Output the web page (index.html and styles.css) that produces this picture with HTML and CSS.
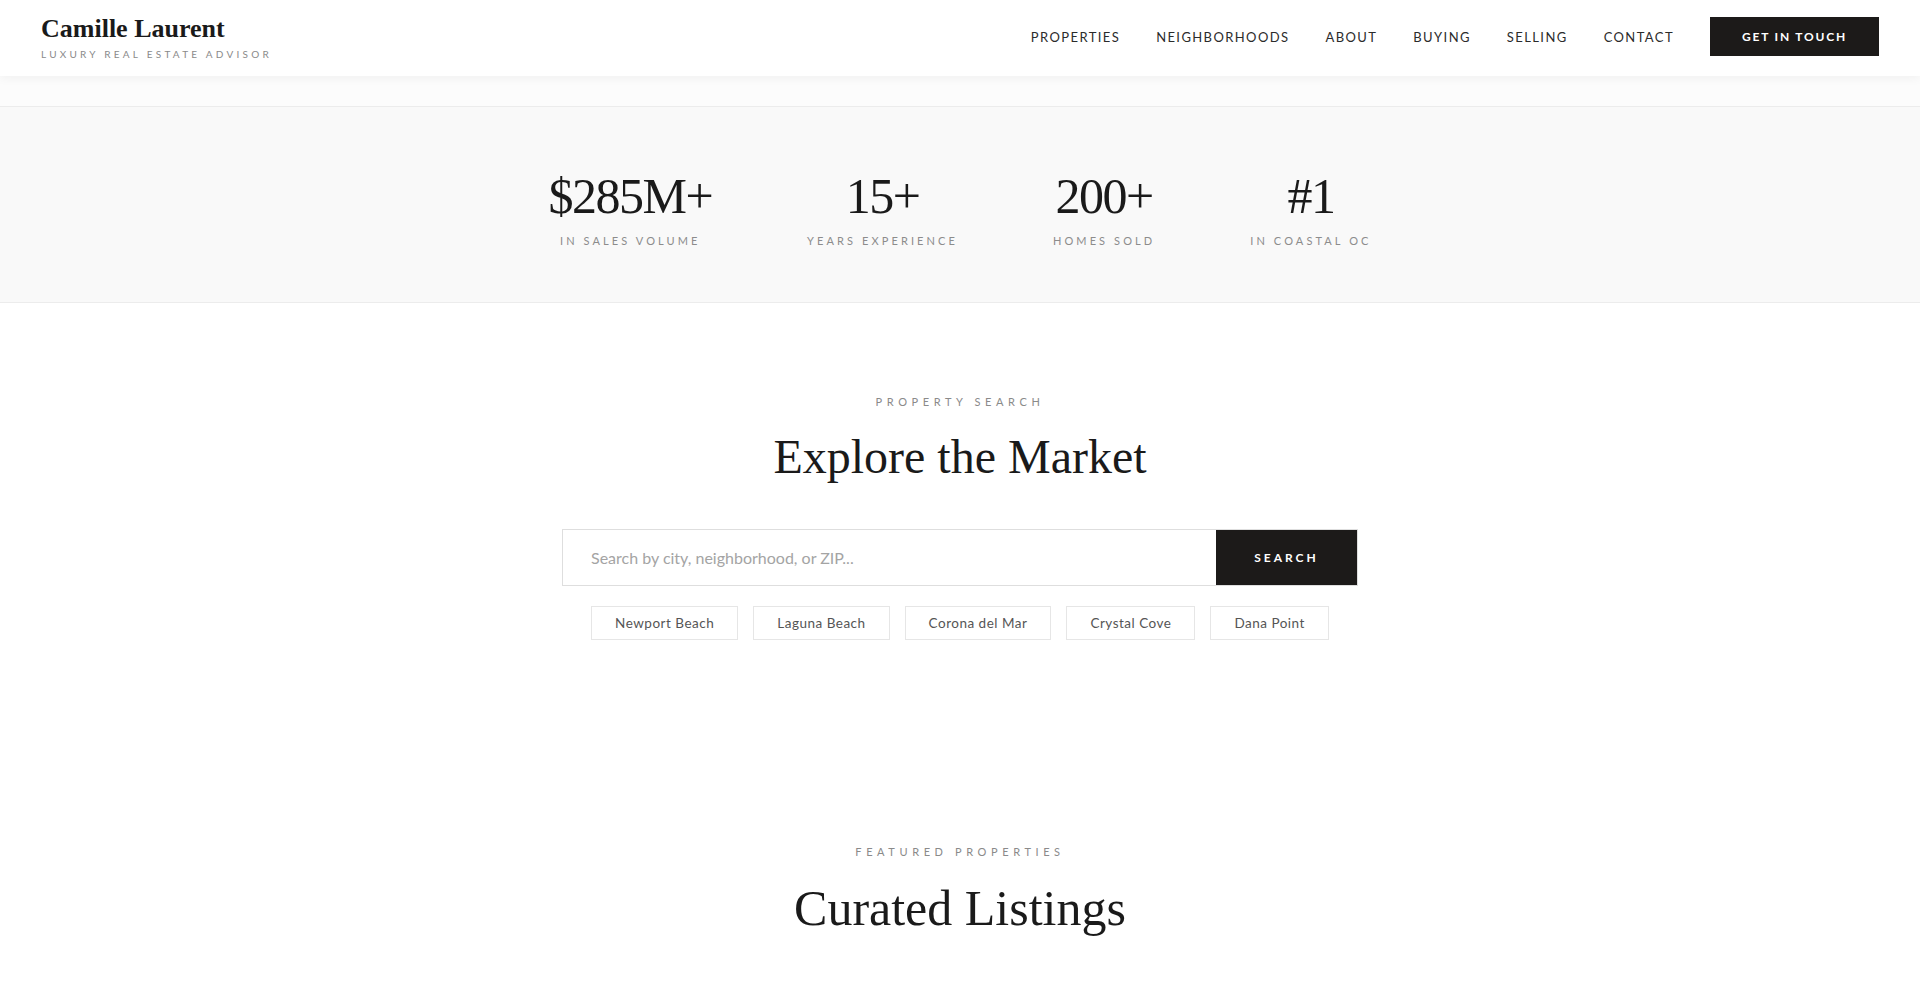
FILE: index.html
```html
<!DOCTYPE html>
<html lang="en">
<head>
    <meta charset="UTF-8">
    <meta name="viewport" content="width=device-width, initial-scale=1.0">
    <title>Camille Laurent | Luxury Real Estate Advisor</title>
    <link rel="stylesheet" href="styles.css">
</head>
<body>
    <header class="site-header">
        <a href="#" class="brand">
            <span class="brand-name">Camille Laurent</span>
            <span class="brand-tagline">Luxury Real Estate Advisor</span>
        </a>
        <nav class="main-nav">
            <a href="#">Properties</a>
            <a href="#">Neighborhoods</a>
            <a href="#">About</a>
            <a href="#">Buying</a>
            <a href="#">Selling</a>
            <a href="#">Contact</a>
            <a href="#" class="btn-dark">Get in Touch</a>
        </nav>
    </header>

    <div class="hero-end"></div>

    <section class="stats">
        <div class="stat">
            <div class="stat-value">$285M+</div>
            <div class="stat-label">In Sales Volume</div>
        </div>
        <div class="stat">
            <div class="stat-value">15+</div>
            <div class="stat-label">Years Experience</div>
        </div>
        <div class="stat">
            <div class="stat-value">200+</div>
            <div class="stat-label">Homes Sold</div>
        </div>
        <div class="stat">
            <div class="stat-value">#1</div>
            <div class="stat-label">In Coastal OC</div>
        </div>
    </section>

    <section class="search-section">
        <div class="eyebrow">Property Search</div>
        <h2 class="section-title">Explore the Market</h2>

        <form class="search-bar" onsubmit="return false;">
            <input type="text" placeholder="Search by city, neighborhood, or ZIP...">
            <button type="submit">Search</button>
        </form>

        <div class="quick-areas">
            <a href="#" class="area-chip">Newport Beach</a>
            <a href="#" class="area-chip">Laguna Beach</a>
            <a href="#" class="area-chip">Corona del Mar</a>
            <a href="#" class="area-chip">Crystal Cove</a>
            <a href="#" class="area-chip">Dana Point</a>
        </div>
    </section>

    <section class="featured">
        <div class="eyebrow">Featured Properties</div>
        <h2 class="section-title">Curated Listings</h2>
    </section>
</body>
</html>
```

FILE: styles.css
```css
* {
    box-sizing: border-box;
}

body {
    margin: 0;
    font-family: 'Lato', 'Liberation Sans', sans-serif;
    color: #1a1a1a;
    background-color: #fff;
}

a {
    color: inherit;
    text-decoration: none;
}

/* Header */
.site-header {
    position: relative;
    z-index: 2;
    height: 76px;
    padding: 0 41px 3px 41px;
    display: flex;
    align-items: center;
    justify-content: space-between;
    background-color: #fff;
    box-shadow: 0 2px 10px rgba(0, 0, 0, 0.05);
}

.brand {
    display: flex;
    flex-direction: column;
    margin-top: 2px;
}

.brand-name {
    font-family: 'Liberation Serif', serif;
    font-size: 26px;
    font-weight: 700;
    line-height: 1.1;
    color: #1a1a1a;
}

.brand-tagline {
    margin-top: 4px;
    font-size: 10px;
    letter-spacing: 3.25px;
    text-transform: uppercase;
    color: #8a8a8a;
}

.main-nav {
    display: flex;
    align-items: center;
    gap: 36px;
}

.main-nav a {
    font-size: 13px;
    letter-spacing: 1.4px;
    text-transform: uppercase;
    color: #2b2b2b;
}

.main-nav .btn-dark {
    height: 39px;
    padding: 0 32px;
    display: flex;
    align-items: center;
    background-color: #1c1a19;
    color: #fff;
    font-size: 12px;
    font-weight: 700;
    letter-spacing: 1.8px;
}

/* Tail of the hero strip under the header */
.hero-end {
    height: 31px;
    background-color: #fcfcfc;
    border-bottom: 1px solid #ececec;
}

/* Stats band */
.stats {
    display: flex;
    justify-content: center;
    gap: 95px;
    padding: 64px 0 54px;
    background-color: #f9f9f9;
    border-bottom: 1px solid #ececec;
}

.stat {
    text-align: center;
}

.stat-value {
    font-family: 'Liberation Serif', serif;
    font-size: 50px;
    line-height: 1;
    letter-spacing: -1.5px;
    color: #1a1a1a;
}

.stat-label {
    margin-top: 12px;
    font-size: 11px;
    line-height: 1.4;
    letter-spacing: 3.1px;
    text-transform: uppercase;
    color: #8c8c8c;
}

/* Section headings */
.eyebrow {
    font-size: 11px;
    line-height: 1.4;
    letter-spacing: 4.6px;
    text-transform: uppercase;
    color: #8a8a8a;
}

.section-title {
    margin: 18px 0 0;
    font-family: 'Liberation Serif', serif;
    font-size: 48px;
    font-weight: 400;
    line-height: 1.2;
    color: #1a1a1a;
}

.featured .section-title {
    font-size: 50px;
}

/* Property search */
.search-section {
    padding: 91px 0 100px;
    text-align: center;
}

.search-bar {
    width: 796px;
    height: 57px;
    margin: 44px auto 0;
    display: flex;
    border: 1px solid #dedede;
}

.search-bar input {
    flex: 1;
    border: none;
    padding: 0 28px;
    font-family: inherit;
    font-size: 16px;
    color: #333;
    background: #fff;
}

.search-bar input::placeholder {
    color: #a4a4a4;
}

.search-bar input:focus {
    outline: none;
}

.search-bar button {
    width: 141px;
    border: none;
    background-color: #1c1a19;
    color: #fff;
    font-family: inherit;
    font-size: 12px;
    font-weight: 700;
    letter-spacing: 3px;
    text-transform: uppercase;
    cursor: pointer;
}

.quick-areas {
    margin-top: 20px;
    display: flex;
    justify-content: center;
    gap: 15px;
}

.area-chip {
    height: 34px;
    padding: 0 23px;
    display: flex;
    align-items: center;
    border: 1px solid #e6e6e6;
    font-size: 13.5px;
    letter-spacing: 0.5px;
    color: #555;
}

/* Featured listings */
.featured {
    padding: 104px 0 80px;
    text-align: center;
}
```
